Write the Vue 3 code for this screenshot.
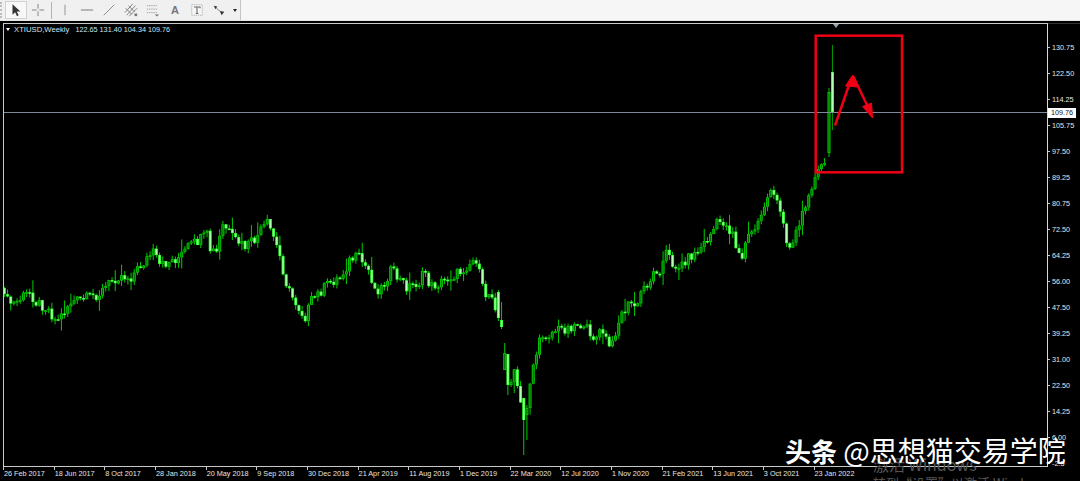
<script setup>
const keyPoints = [[4,288],[8,303],[15,303],[25,295],[30,292],[36,302],[48,308],[55,320],[62,315],[70,302],[80,300],[88,298],[100,293],[112,280],[120,275],[130,278],[143,263],[153,252],[160,267],[168,262],[180,257],[188,247],[197,242],[207,235],[210,250],[217,253],[222,225],[228,230],[232,238],[245,247],[255,240],[263,228],[267,223],[273,235],[280,257],[288,290],[293,298],[302,313],[305,317],[312,300],[330,282],[340,278],[350,260],[358,257],[370,272],[375,290],[383,287],[390,270],[397,277],[407,287],[420,282],[425,270],[430,287],[440,283],[450,277],[460,272],[470,263],[476,258],[482,287],[485,295],[493,293],[497,315],[501,327],[504,350],[507,383],[510,388],[513,370],[517,383],[519,397],[523,420],[526,408],[529,387],[532,370],[535,357],[538,348],[542,335],[548,335],[555,330],[567,328],[580,322],[583,333],[588,328],[595,340],[602,330],[608,345],[612,347],[615,332],[621,315],[630,303],[638,307],[640,292],[652,278],[655,270],[662,268],[665,250],[672,263],[680,268],[685,260],[697,252],[707,240],[718,222],[725,222],[728,232],[732,227],[735,243],[742,262],[745,242],[757,225],[763,208],[767,198],[772,193],[777,202],[783,215],[786,242],[790,247],[798,227],[804,212],[807,193],[813,183],[818,173],[822,165],[826,160]]

const overrides = [
  { x: 497, o: 292, c: 318, h: 290, l: 321 },
  { x: 501, o: 320, c: 327, h: 302, l: 329 },
  { x: 504, o: 370, c: 353, h: 343, l: 370 },
  { x: 507, o: 354, c: 385, h: 354, l: 395 },
  { x: 523, o: 398, c: 420, h: 398, l: 455 },
  { x: 526, o: 415, c: 408, h: 405, l: 440 }
]

const rnd = (n) => {
  const v = Math.sin(n * 12.9898) * 43758.5453
  return v - Math.floor(v)
}

const priceAt = (x) => {
  for (let k = 1; k < keyPoints.length; k++) {
    const [x1, y1] = keyPoints[k]
    if (x <= x1) {
      const [x0, y0] = keyPoints[k - 1]
      return y0 + ((y1 - y0) * (x - x0)) / (x1 - x0)
    }
  }
  return keyPoints[keyPoints.length - 1][1]
}

const makeCandles = () => {
  const list = []
  let prev = 288
  for (let i = 0; i < 260; i++) {
    const x = 4.4 + i * 3.1667
    const close = priceAt(x) + (rnd(i + 1) - 0.5) * 11
    const open = prev
    const swing = rnd(i + 300) > 0.86 ? 2.6 : 1
    let c = {
      x,
      o: open,
      c: close,
      h: Math.min(open, close) - rnd(i + 100) * 5 * swing,
      l: Math.max(open, close) + rnd(i + 200) * 5 * swing
    }
    const fix = overrides.find((f) => Math.abs(f.x - x) < 1.6)
    if (fix) c = { ...fix, x }
    list.push(c)
    prev = c.c
  }
  list.push({ x: 829, o: 153, c: 92, h: 88, l: 157 })
  list.push({ x: 832.5, o: 72, c: 112, h: 45, l: 130, tall: true })
  return list.map((c) => {
    const top = Math.min(c.o, c.c)
    const height = Math.max(Math.abs(c.o - c.c), 1.6)
    return { ...c, top, height, up: c.c < c.o }
  })
}
const candles = makeCandles()

const prices = ['130.75','122.50','114.25','105.75','97.50','89.25','80.75','72.50','64.25','56.00','47.50','39.25','31.00','22.50','14.25','6.00','-2.5']
const dates = ['26 Feb 2017','18 Jun 2017','8 Oct 2017','28 Jan 2018','20 May 2018','9 Sep 2018','30 Dec 2018','21 Apr 2019','11 Aug 2019','1 Dec 2019','22 Mar 2020','12 Jul 2020','1 Nov 2020','21 Feb 2021','13 Jun 2021','3 Oct 2021','23 Jan 2022']
</script>

<template>
  <div class="screen">
    <div class="toolbar">
      <div class="tools">
        <span class="grip"></span>
        <button class="tool active">
          <svg viewBox="0 0 16 16"><path d="M4 1.500v12l3-3 2.200 4.500 1.800-.9L8.800 9.800H13z" fill="#333"/></svg>
        </button>
        <button class="tool">
          <svg viewBox="0 0 16 16"><path d="M8 1v5.500M8 9.500V15M1 8h5.500M9.500 8H15" stroke="#777" fill="none"/></svg>
        </button>
        <span class="sep"></span>
        <button class="tool">
          <svg viewBox="0 0 16 16"><path d="M8 2v12" stroke="#888" fill="none"/></svg>
        </button>
        <button class="tool">
          <svg viewBox="0 0 16 16"><path d="M1 8h14" stroke="#777" stroke-width="1.100" fill="none"/></svg>
        </button>
        <button class="tool">
          <svg viewBox="0 0 16 16"><path d="M2 14L14 2" stroke="#888" stroke-width="1.100" fill="none"/></svg>
        </button>
        <button class="tool">
          <svg viewBox="0 0 16 16"><path d="M1 11L10 1M3 14L13 3M6 15L15 6M2 6l7 7M5 3l7 7" stroke="#777" fill="none"/><path d="M12 12h3v3h-3z" fill="#777"/></svg>
        </button>
        <button class="tool">
          <svg viewBox="0 0 16 16"><path d="M1 3h12M1 7h12M1 11h12" stroke="#999" stroke-dasharray="1.500 1" fill="none"/><path d="M10 13h5l-2.500 2.500z" fill="#777"/></svg>
        </button>
        <button class="tool">
          <span class="tool-letter">A</span>
        </button>
        <button class="tool">
          <svg viewBox="0 0 16 16"><path d="M2 2h12v12H2z" stroke="#aaa" stroke-dasharray="1.500 1" fill="#f7f7f7"/><path d="M4.500 4.500h7v1.500M8 4.500v7.500M6.500 12h3" stroke="#666" stroke-width="1.200" fill="none"/></svg>
        </button>
        <button class="tool">
          <svg viewBox="0 0 16 16"><path d="M2 3l4 1-2 3z" fill="#333"/><path d="M5 6l5 4" stroke="#777" fill="none"/><path d="M9 9l5 1-3 4z" fill="#333"/></svg>
        </button>
        <span class="caret"></span>
      </div>
    </div>

    <div class="chart">
      <div class="chart-main">
        <div class="plot">
          <div class="symbol">
            <span class="symbol-mark"></span>
            <span class="symbol-name">XTIUSD,Weekly</span>
            <span>122.65 131.40 104.34 109.76</span>
          </div>
          <span class="shift-mark"></span>
          <svg class="plot-canvas" viewBox="4 24 1043 442" width="1043" height="442">
            <g v-for="(c, i) in candles" :key="i">
              <line :x1="c.x" :x2="c.x" :y1="c.h" :y2="c.l" :stroke="c.tall ? '#009000' : '#00cc00'" stroke-width="1" />
              <rect :x="c.x - 1.5" :y="c.top" width="3" :height="c.height" :fill="c.up ? '#00d400' : '#30ff30'" />
              <rect :x="c.x - 0.6" :y="c.top + 0.6" width="1.200" :height="Math.max(c.height - 1.200, 0.5)" :fill="c.up ? '#006c00' : '#b4ffb4'" />
            </g>
            <line x1="4" x2="1047" y1="112.500" y2="112.500" stroke="#7b8b9b" stroke-width="1" />
            <rect x="815.700" y="35.700" width="86.300" height="136.600" fill="none" stroke="#f00014" stroke-width="2.500" />
            <g fill="#f00014" stroke="#f00014">
              <path d="M835 125.500L849 85" stroke-width="2.500" fill="none" />
              <path d="M852.700 75L857 87L845.500 86z" stroke-width="1" />
              <path d="M853 76L867.500 106" stroke-width="2.500" fill="none" />
              <path d="M872.500 118L862.500 106.500L871.500 103z" stroke-width="1" />
            </g>
          </svg>
        </div>
        <div class="price-axis">
          <div v-for="p in prices" :key="p" class="price">{{ p }}</div>
          <div class="price-now">109.76</div>
        </div>
      </div>
      <div class="time-axis">
        <div v-for="d in dates" :key="d" class="date">{{ d }}</div>
      </div>
    </div>

    <div class="activation">
      <div class="activation-title">激活 Windows</div>
      <div class="activation-hint">转到“设置”以激活 Windows。</div>
    </div>
    <div class="watermark"><b>头条</b> <span>@思想猫交易学院</span></div>
  </div>
</template>

<style scoped>
.screen {
  position: relative;
  width: 1080px;
  height: 481px;
  overflow: hidden;
  background: #000;
  font-family: "Liberation Sans", Arial, sans-serif;
}
.toolbar {
  height: 21px;
  box-sizing: border-box;
  background: #f6f6f6;
  border-bottom: 1px solid #e4e4e4;
}
.tools {
  display: flex;
  align-items: center;
  width: 241px;
  height: 20px;
  box-sizing: border-box;
  background: #f0f0f0;
  border-right: 1px solid #c4c4c4;
}
.grip {
  width: 3px;
  height: 16px;
  margin: 0 2px 0 0;
  border-left: 2px dotted #bcbcbc;
  box-sizing: border-box;
}
.tool {
  display: flex;
  align-items: center;
  justify-content: center;
  width: 22px;
  height: 18px;
  padding: 0;
  border: 0;
  background: none;
}
.tool svg {
  width: 14px;
  height: 14px;
}
.tool.active {
  background: #f8f8f8;
  box-shadow: inset 0 0 0 1px #d0d0d0;
}
.tool-letter {
  font-size: 11px;
  font-weight: 700;
  color: #777;
}
.sep {
  width: 1px;
  height: 17px;
  margin: 0 2px;
  background: #b4b4b4;
}
.caret {
  width: 0;
  height: 0;
  margin-left: 3px;
  border-left: 2.500px solid transparent;
  border-right: 2.500px solid transparent;
  border-top: 3px solid #222;
}
.chart {
  padding-top: 2px;
  color: #e6e6e6;
  font-size: 7.250px;
}
.chart-main {
  display: flex;
  height: 444px;
  margin-left: 3px;
}
.plot {
  position: relative;
  width: 1045px;
  height: 444px;
  box-sizing: border-box;
  border: 1px solid #c8c8c8;
  border-right-color: #d8d8d8;
}
.plot-canvas {
  display: block;
}
.symbol {
  position: absolute;
  top: 1px;
  left: 2px;
  display: flex;
  align-items: center;
  gap: 6px;
  height: 9px;
  color: #d2e2ee;
}
.symbol-name {
  font-size: 7.700px;
}
.symbol-mark {
  width: 0;
  height: 0;
  margin-right: -2px;
  border-left: 2.500px solid transparent;
  border-right: 2.500px solid transparent;
  border-top: 3px solid #fff;
}
.shift-mark {
  position: absolute;
  top: 0;
  left: 829px;
  width: 0;
  height: 0;
  border-left: 3.500px solid transparent;
  border-right: 3.500px solid transparent;
  border-top: 4px solid #9aa4ac;
}
.price-axis {
  position: relative;
  flex: 1;
  height: 444px;
  padding-top: 10px;
  border-top: 1px solid #333;
  box-sizing: border-box;
}
.price {
  display: flex;
  align-items: center;
  height: 26.060px;
  padding-left: 3px;
}
.price::before {
  content: "";
  width: 2px;
  height: 1px;
  margin: 0 2px 0 -3px;
  background: #c8c8c8;
}
.price-now {
  position: absolute;
  top: 84px;
  left: 0;
  width: 28px;
  height: 10px;
  line-height: 10px;
  text-align: center;
  background: #fff;
  color: #111;
}
.time-axis {
  display: flex;
  margin-left: 3px;
}
.date {
  flex: none;
  width: 50.670px;
  height: 12px;
  box-sizing: border-box;
  padding: 2px 0 0 1px;
  white-space: nowrap;
  background: linear-gradient(#c8c8c8, #c8c8c8) left top / 1px 3px no-repeat;
}
.activation {
  position: absolute;
  top: 455px;
  left: 873px;
  color: #555;
  font-family: "Noto Sans CJK SC", "Liberation Sans", sans-serif;
  white-space: nowrap;
}
.activation-title {
  font-size: 16px;
  line-height: 19px;
}
.activation-hint {
  font-size: 13px;
  line-height: 18px;
}
.watermark {
  position: absolute;
  top: 431px;
  left: 785px;
  color: #fff;
  font-family: "Noto Sans CJK SC", "Liberation Sans", sans-serif;
  font-size: 28px;
  line-height: 38px;
  white-space: nowrap;
}
.watermark b {
  font-size: 26px;
  font-weight: 700;
}
</style>
